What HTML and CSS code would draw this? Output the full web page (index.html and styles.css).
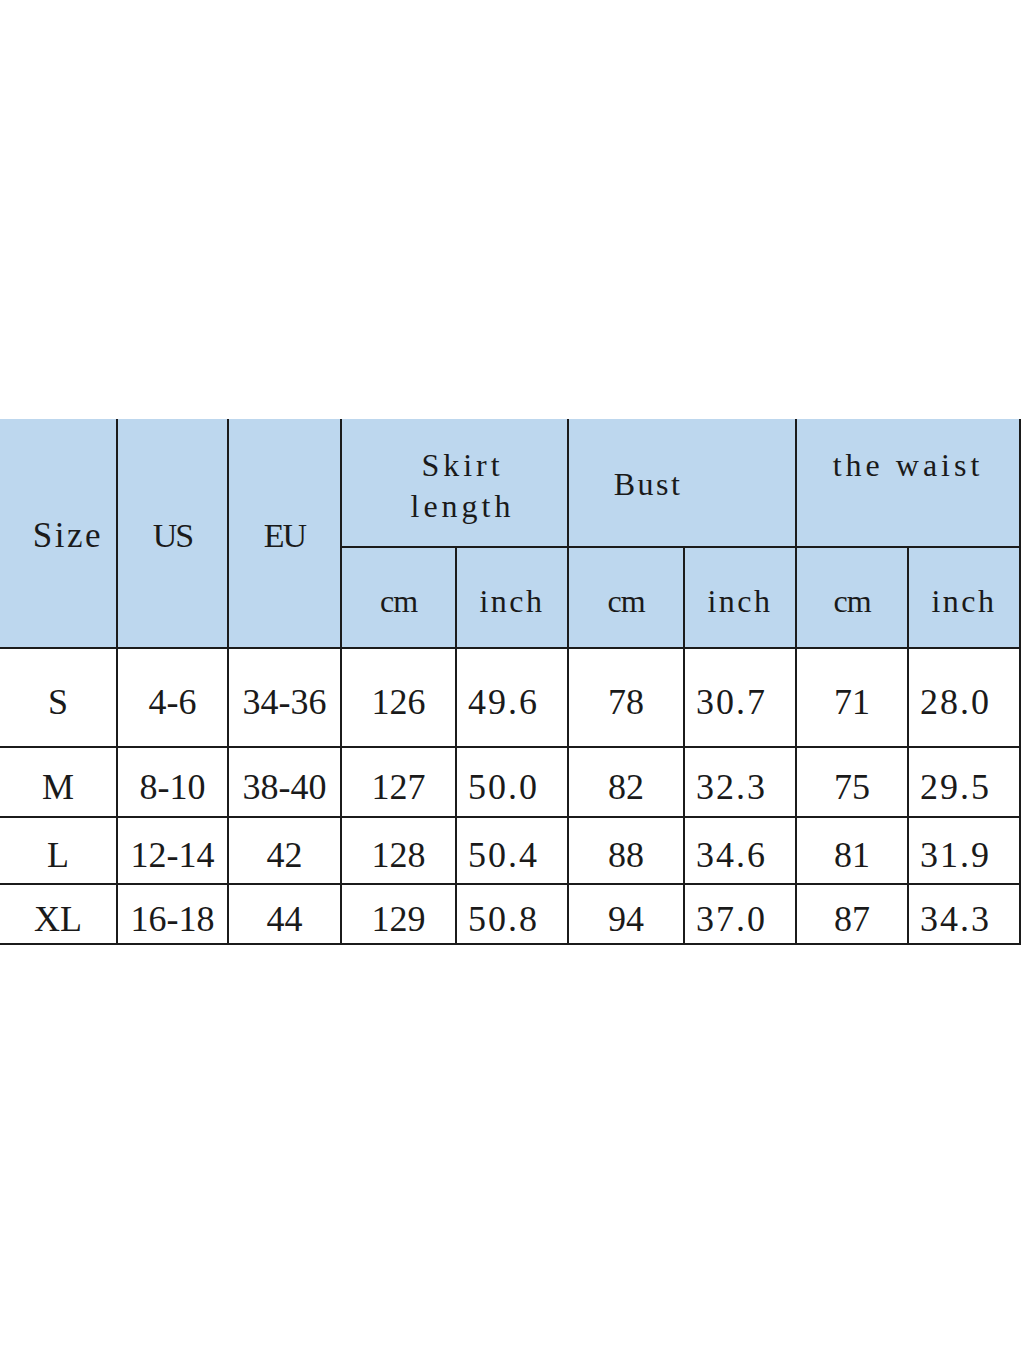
FILE: index.html
```html
<!DOCTYPE html>
<html lang="en">
<head>
<meta charset="utf-8">
<title>Size chart</title>
<link rel="stylesheet" href="styles.css">
</head>
<body>
<div class="page">
  <div class="chart">
    <div class="h span-r h-size">Size</div>
    <div class="h span-r h-cap">US</div>
    <div class="h span-r h-cap">EU</div>
    <div class="h span-c h-two">Skirt<br>length</div>
    <div class="h span-c h-bust">Bust</div>
    <div class="h span-c h-waist">the waist</div>
    <div class="h h-unit h-cm">cm</div>
    <div class="h h-unit">inch</div>
    <div class="h h-unit h-cm">cm</div>
    <div class="h h-unit">inch</div>
    <div class="h h-unit h-cm">cm</div>
    <div class="h h-unit">inch</div>

    <div class="d">S</div><div class="d">4-6</div><div class="d">34-36</div>
    <div class="d">126</div><div class="d dl">49.6</div>
    <div class="d">78</div><div class="d dl">30.7</div>
    <div class="d">71</div><div class="d dl">28.0</div>

    <div class="d">M</div><div class="d">8-10</div><div class="d">38-40</div>
    <div class="d">127</div><div class="d dl">50.0</div>
    <div class="d">82</div><div class="d dl">32.3</div>
    <div class="d">75</div><div class="d dl">29.5</div>

    <div class="d">L</div><div class="d">12-14</div><div class="d">42</div>
    <div class="d">128</div><div class="d dl">50.4</div>
    <div class="d">88</div><div class="d dl">34.6</div>
    <div class="d">81</div><div class="d dl">31.9</div>

    <div class="d">XL</div><div class="d">16-18</div><div class="d">44</div>
    <div class="d">129</div><div class="d dl">50.8</div>
    <div class="d">94</div><div class="d dl">37.0</div>
    <div class="d">87</div><div class="d dl">34.3</div>
  </div>
</div>
</body>
</html>
```
FILE: styles.css
```css
html, body {
  margin: 0;
  padding: 0;
  background: #ffffff;
}

.page {
  width: 1024px;
  height: 1365px;
  padding-top: 419px;
  box-sizing: border-box;
}

.chart {
  width: 1021px;
  display: grid;
  grid-template-columns: 116px 109px 111px 113px 110px 114px 110px 110px 110px;
  grid-template-rows: 127px 99px 97px 68px 65px 58px;
  gap: 2px;
  padding: 0 2px 2px 0;
  box-sizing: border-box;
  background: #1b1b1b;
  color: #1a1a1a;
}

.h {
  background: #bdd7ee;
  display: flex;
  align-items: center;
  justify-content: center;
  text-align: center;
  font-family: "Liberation Serif", serif;
  font-size: 32px;
  letter-spacing: 3px;
}

.span-r { grid-row: span 2; }
.span-c { grid-column: span 2; }

.h-size {
  font-size: 35px;
  letter-spacing: 2.5px;
  padding-left: 20px;
  padding-top: 6px;
}

.h-cap {
  font-size: 34px;
  letter-spacing: -2px;
  padding-top: 6px;
}

.h-two {
  line-height: 41px;
  letter-spacing: 4px;
  padding-top: 6px;
  padding-left: 16px;
}

.h-bust {
  padding-top: 4px;
  padding-right: 68px;
  letter-spacing: 2.5px;
}

.h-waist {
  letter-spacing: 4px;
  padding-bottom: 34px;
}

.h-unit {
  padding-top: 8px;
  letter-spacing: 2.5px;
}

.h-cm {
  letter-spacing: -1px;
}

.d {
  background: #ffffff;
  display: flex;
  align-items: center;
  justify-content: center;
  font-family: "Liberation Serif", serif;
  font-size: 36px;
  padding-top: 9px;
}

.dl {
  justify-content: flex-start;
  padding-left: 11px;
  letter-spacing: 2px;
}
```
